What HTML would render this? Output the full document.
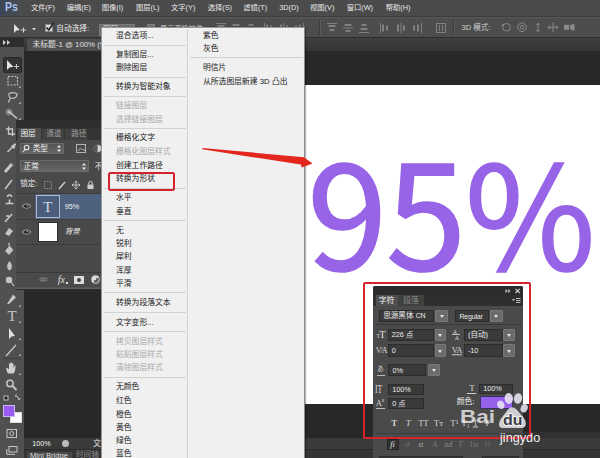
<!DOCTYPE html>
<html lang="zh-CN"><head><meta charset="utf-8"><title>Photoshop</title>
<style>

html,body{margin:0;padding:0}
html{width:600px;height:458px;overflow:hidden;background:#282828}
body{width:600px;height:458px;overflow:hidden;position:relative;background:#282828;font-family:"Liberation Sans","Noto Sans CJK SC",sans-serif;font-size:7.8px;color:#e4e4e4;line-height:1}
div,span{position:absolute;box-sizing:border-box;white-space:nowrap}
.t{transform:translateY(-50%)}
#menubar{left:0;top:0;width:600px;height:16px;background:#4b4b4b}
#menubar .t{top:7.8px;color:#eaeaea;font-size:7.3px}
#opts{left:0;top:16px;width:600px;height:22px;background:#4d4d4d;border-top:1px solid #3c3c3c;box-shadow:inset 0 1px 0 #595959;border-bottom:1px solid #2e2e2e}
#tabbar{left:24px;top:38px;width:576px;height:12.5px;background:linear-gradient(#404040,#343434)}
#doctab{left:3px;top:1px;width:76px;height:11.5px;background:#4e4e4e;color:#e0e0e0}
#work{left:24px;top:50.5px;width:576px;height:387.5px;background:#282828}
#canvas{left:305px;top:85px;width:295px;height:318.8px;background:#fff}
#big{left:307.3px;top:96.8px;font-family:"Noto Sans CJK SC","Liberation Sans",sans-serif;font-size:144px;color:#9764e8;letter-spacing:-1px;-webkit-text-stroke:1.7px #9764e8;line-height:220px;height:220px}
#tools{left:0;top:38px;width:24px;height:420px;background:#505050}
#toolhead{left:0;top:0;width:24px;height:8.5px;background:#2d2d2d}
#status{left:24px;top:438.2px;width:576px;height:11.8px;background:#3b3b3b;border-bottom:1.2px solid #2a2a2a}
#bottom{left:24px;top:450px;width:576px;height:8px;background:#353535}
#minib{left:2.7px;top:1.600px;width:45px;height:8px;background:#4a4a4a;color:#ddd}
#layers{left:15.7px;top:120px;width:90px;height:170px;background:#494949}
#menu{left:101px;top:27px;width:204px;height:431px;background:#f0f0f0;border-left:1px solid #979797;border-top:1px solid #979797;border-right:1px solid #8e8e8e;color:#1a1a1a;box-shadow:1px 0 1px rgba(0,0,0,.3)}
#menu .sep{height:1px;background:#d2d2d2}
#menu .dis{color:#a9a9a9}
#coldiv{left:85px;top:2px;width:1px;height:429px;background:#d0d0d0}
#redbox{left:107.7px;top:171.5px;width:67.8px;height:19.3px;border:2.1px solid #d3232c;border-radius:2.5px}
#charwrap{left:363.3px;top:282.3px;width:167.8px;height:156.8px;border:2.2px solid #d5242c;border-radius:2px}
#char{left:373.2px;top:286px;width:150.3px;height:172px;background:#4a4a4a;border-radius:2px 2px 0 0;overflow:hidden}
.inp{background:#3a3a3a;border:1px solid #2c2c2c;color:#ececec}
.btn{background:#6b6b6b;border:1px solid #787878;border-radius:1px}
.btn:after{content:"";position:absolute;left:50%;top:50%;margin:-1px 0 0 -2px;border:2px solid transparent;border-top:3px solid #e8e8e8;border-bottom:0}

</style></head><body>
<div id="menubar">
<span style="left:0;top:0;width:21px;height:16px;background:linear-gradient(90deg,#3d4656,#4a4c52)"></span>
<span class="t" style="left:5px;top:7.3px;font-size:12.5px;font-weight:bold;color:#a9c3ee;transform:translateY(-50%) scaleX(.84);transform-origin:left center">Ps</span>
<span class="t" style="left:31px">文件(F)</span>
<span class="t" style="left:66.7px">编辑(E)</span>
<span class="t" style="left:101.7px">图像(I)</span>
<span class="t" style="left:136px">图层(L)</span>
<span class="t" style="left:171px">文字(Y)</span>
<span class="t" style="left:207.7px">选择(S)</span>
<span class="t" style="left:243.3px">滤镜(T)</span>
<span class="t" style="left:279.3px">3D(D)</span>
<span class="t" style="left:310px">视图(V)</span>
<span class="t" style="left:346.7px">窗口(W)</span>
<span class="t" style="left:385.7px">帮助(H)</span>
</div>
<div id="opts">
<svg style="position:absolute;left:13px;top:5.5px" width="26" height="12" viewBox="0 0 26 12"><path d="M1 1 L1 10 L3.5 7.5 L7 7 Z" fill="#e0e0e0"/><path d="M8 7 h5 M10.5 4.5 v5" stroke="#d0d0d0" stroke-width="1" fill="none"/><path d="M19 5 h4 l-2 2.5z" fill="#d8d8d8"/></svg>
<span style="left:44.7px;top:7px;width:8px;height:8px;background:#d9d9d9;border:1px solid #8a8a8a"></span>
<svg style="position:absolute;left:44px;top:3.5px" width="12" height="12" viewBox="0 0 12 12"><path d="M2.5 6.5 L4.8 9 L9.5 2" stroke="#222" stroke-width="1.6" fill="none"/></svg>
<span class="t" style="left:56.3px;top:11.5px;color:#ececec;font-size:7.7px">自动选择:</span>
<span style="left:98.7px;top:6.7px;width:36px;height:12px;background:#6c6c6c;border:1px solid #7c7c7c"></span>
<span class="t" style="left:103px;top:12.5px;color:#eee;font-size:7.5px">图层</span>
<span style="left:147px;top:7px;width:7.5px;height:7.5px;background:#727272;border:1px solid #7e7e7e"></span>
<span class="t" style="left:160px;top:11.5px;color:#d8d8d8;font-size:7.2px">显示变换控件</span>
<svg style="position:absolute;left:0;top:0" width="600" height="21" viewBox="0 17 600 21" fill="none">
<path d="M216 23.5 h10" stroke="#7c7c7c"/><rect x="217.5" y="25" width="7" height="2" fill="#7c7c7c"/><rect x="218.5" y="29" width="5" height="2" fill="#7c7c7c"/>
<rect x="232.5" y="24" width="7" height="2" fill="#7c7c7c"/><path d="M231 28 h10" stroke="#7c7c7c"/><rect x="233.5" y="30" width="5" height="2" fill="#7c7c7c"/>
<rect x="248.5" y="24" width="5" height="2" fill="#7c7c7c"/><rect x="247.5" y="28" width="7" height="2" fill="#7c7c7c"/><path d="M246 32.500 h10" stroke="#7c7c7c"/>
<path d="M264.5 23 v10" stroke="#7c7c7c"/><rect x="266" y="24.500" width="2" height="7" fill="#7c7c7c"/><rect x="270" y="25.500" width="2" height="5" fill="#7c7c7c"/>
<rect x="280" y="24.500" width="2" height="7" fill="#7c7c7c"/><path d="M284 23 v10" stroke="#7c7c7c"/><rect x="286" y="25.500" width="2" height="5" fill="#7c7c7c"/>
<rect x="295" y="25.500" width="2" height="5" fill="#7c7c7c"/><rect x="299" y="24.500" width="2" height="7" fill="#7c7c7c"/><path d="M303.5 23 v10" stroke="#7c7c7c"/>
<path d="M327 23.5 h10" stroke="#808080"/><rect x="328.5" y="25" width="7" height="2" fill="#808080"/><rect x="329.5" y="29" width="5" height="2" fill="#808080"/>
<rect x="344.5" y="24" width="7" height="2" fill="#808080"/><path d="M343 28 h10" stroke="#808080"/><rect x="345.5" y="30" width="5" height="2" fill="#808080"/>
<rect x="361.5" y="24" width="5" height="2" fill="#808080"/><rect x="360.5" y="28" width="7" height="2" fill="#808080"/><path d="M359 32.500 h10" stroke="#808080"/>
<path d="M380.5 23 v10" stroke="#808080"/><rect x="382" y="24.500" width="2" height="7" fill="#808080"/><rect x="386" y="25.500" width="2" height="5" fill="#808080"/>
<rect x="397" y="24.500" width="2" height="7" fill="#808080"/><path d="M401 23 v10" stroke="#808080"/><rect x="403" y="25.500" width="2" height="5" fill="#808080"/>
<rect x="413" y="25.500" width="2" height="5" fill="#808080"/><rect x="417" y="24.500" width="2" height="7" fill="#808080"/><path d="M421.5 23 v10" stroke="#808080"/>
<rect x="436.500" y="23.500" width="9" height="9" stroke="#808080"/><path d="M439.500 25 v6 M442.500 25 v6" stroke="#808080"/>
<path d="M319.500 20 v15 M453.500 20 v15" stroke="#3c3c3c"/><path d="M320.500 20 v15 M454.500 20 v15" stroke="#5a5a5a"/>
<g transform="translate(0.5,-0.7)">
<circle cx="506" cy="28" r="3.800" stroke="#8a8a8a"/><path d="M503 24.500 l-1.500 1.500 l2 .5" stroke="#8a8a8a"/>
<circle cx="521.500" cy="28" r="4.300" stroke="#8a8a8a"/><circle cx="521.500" cy="28" r="1.800" stroke="#8a8a8a"/>
<path d="M537.500 24 v8.500 M535.500 26 l2 -2 l2 2 M535.500 30.500 l2 2 l2 -2" stroke="#8a8a8a"/>
<path d="M547.500 28 h10 M552.500 23 v10 M549.500 26 l-2 2 l2 2 M555.500 26 l2 2 l-2 2" stroke="#8a8a8a"/>
<rect x="563.500" y="25.500" width="5" height="5" fill="#8a8a8a"/><path d="M569.500 26 l4.500 -1.500 v7 l-4.500 -1.500z" fill="#8a8a8a"/>
</g>
</svg>
<span class="t" style="left:461.500px;top:10.500px;color:#cfcfcf;font-size:7.5px">3D 模式:</span>
</div>
<div id="tabbar"><div id="doctab"><span class="t" style="left:5.5px;top:5.5px;font-size:7.8px">未标题-1 @ 100% (95%, RGB/8)</span></div></div>
<div id="work"></div>
<div id="canvas"></div>
<span style="left:523px;top:431.5px;width:77px;height:7px;background:#313131"></span>
<div id="big">95<span style="position:static;display:inline-block;transform:scaleX(.984);transform-origin:left center">%</span></div>
<div id="status"><span class="t" style="left:8.3px;top:6px;color:#f4f4f4;font-size:7.2px">100%</span><span style="left:37.5px;top:1.5px;width:7.5px;height:7.5px;border-radius:4px;background:#bdbdbd"></span><span class="t" style="left:69px;top:6px;color:#e0e0e0;font-size:8px">文档:</span></div>
<div id="bottom"><div id="minib"><span class="t" style="left:3.3px;top:4.700px;font-size:7.6px">Mini Bridge</span></div><span class="t" style="left:52px;top:5.3px;font-size:7.6px;color:#8c8c8c">时间轴</span></div>
<div id="tools"><div id="toolhead"><svg style="position:absolute;left:3px;top:2px" width="8" height="5" viewBox="0 0 8 5"><path d="M0 0 L3 2.5 L0 5z M4 0 L7 2.5 L4 5z" fill="#d0d0d0"/></svg></div>
<span style="left:3px;top:19.3px;width:19px;height:16px;background:#343434;border:1px solid #272727;border-radius:2px"></span>
<svg style="position:absolute;left:0;top:0" width="24" height="420" viewBox="0 38 24 420" fill="none" stroke="#c6c6c6" stroke-width="1.2">
<path d="M7 60 L7 70 L9.8 67.2 L13.5 67 Z" fill="#e6e6e6" stroke="none"/><path d="M14 66.5 h5 M16.5 64 v5" stroke-width="1"/>
<path d="M18.5 88 h2.2 v-2.200z" fill="#bdbdbd" stroke="none"/><path d="M18.5 104 h2.2 v-2.200z" fill="#bdbdbd" stroke="none"/><path d="M18.5 120 h2.2 v-2.200z" fill="#bdbdbd" stroke="none"/><path d="M18.5 137 h2.2 v-2.200z" fill="#bdbdbd" stroke="none"/><path d="M18.5 154 h2.2 v-2.200z" fill="#bdbdbd" stroke="none"/><path d="M18.5 171 h2.2 v-2.200z" fill="#bdbdbd" stroke="none"/><path d="M18.5 188 h2.2 v-2.200z" fill="#bdbdbd" stroke="none"/><path d="M18.5 205 h2.2 v-2.200z" fill="#bdbdbd" stroke="none"/><path d="M18.5 221 h2.2 v-2.200z" fill="#bdbdbd" stroke="none"/><path d="M18.5 238 h2.2 v-2.200z" fill="#bdbdbd" stroke="none"/><path d="M18.5 255 h2.2 v-2.200z" fill="#bdbdbd" stroke="none"/><path d="M18.5 271 h2.2 v-2.200z" fill="#bdbdbd" stroke="none"/><path d="M18.5 288 h2.2 v-2.200z" fill="#bdbdbd" stroke="none"/><path d="M18.5 307 h2.2 v-2.200z" fill="#bdbdbd" stroke="none"/><path d="M18.5 323 h2.2 v-2.200z" fill="#bdbdbd" stroke="none"/><path d="M18.5 340 h2.2 v-2.200z" fill="#bdbdbd" stroke="none"/><path d="M18.5 356 h2.2 v-2.200z" fill="#bdbdbd" stroke="none"/><path d="M18.5 375 h2.2 v-2.200z" fill="#bdbdbd" stroke="none"/>
<rect x="8" y="76.500" width="9.500" height="8.500" stroke-dasharray="2 1.3" />
<path d="M9 93.500 q5 -2 8 0.500 q0 4 -4.500 4.500 q-4.500 -0.500 -3.500 -5 M10 98.500 l-1.500 4" />
<path d="M10 112.500 L17 118.500" stroke-width="1.600"/><path d="M9 108.500 v7 M5.500 112 h7 M6.500 109.500 l5 5 M11.500 109.500 l-5 5" stroke-width=".9"/>
<path d="M8.500 126.500 v7.500 h6.500 M6 129 h6.500 v7" stroke-width="1.300"/>
<path d="M7.500 152 L12.500 147" stroke-width="1.500"/><path d="M12 145.500 l2.500 2.500" stroke-width="2.600"/><path d="M13.500 146 l1.500 -1.500" stroke-width="2.200" stroke-linecap="round"/>
<path d="M5 172 L12 164" stroke-width="3"/>
<path d="M5 189 L12 180" stroke-width="1.6"/>
<path d="M5.500 203.500 h8 M9.500 203.500 v-4 M7.500 197 a2 2 0 1 1 4 0" stroke-width="1.6"/>
<path d="M5 222 l7 -8 M6 216 l3 0" stroke-width="1.6"/>
<path d="M5 234 l4 -6 l4 3 l-4 5z" fill="#c4c4c4" stroke="none"/>
<path d="M5.500 251 l4 -5 l3.500 4 l-4 4.500z M9.500 246 q-2 -3 0 -3" fill="#c4c4c4" stroke="#c4c4c4" stroke-width=".8"/>
<path d="M9.500 261 q5 6 0 9.500 q-5 -3.500 0 -9.500z" fill="#c4c4c4" stroke="none"/>
<circle cx="9" cy="280" r="3.200" fill="#c4c4c4" stroke="none"/><path d="M11 282 l3 4" stroke="#c4c4c4"/>
<path d="M7 304 L13 294.500 L16 297.500 L9 304z M7 304 l-1 2" fill="#c4c4c4" stroke="none"/>
<text x="12" y="321.300" font-family="Liberation Serif, serif" font-size="15" text-anchor="middle" fill="#cacaca" stroke="none">T</text>
<path d="M9 328 L9 339 L11.5 336.5 L15 336 Z" fill="#e0e0e0" stroke="none"/>
<path d="M6 356 L16 345" stroke-width="1.3"/>
<path d="M8 373.500 q-3 -5 -1 -6 l2 2 v-6 h1.5 v4 v-5 h1.5 v5 v-4 h1.5 v5 l1 -3 h1 q0 6 -2 8z" fill="#cecece" stroke="none"/><path d="M3 358.500 h18" stroke="#3e3e3e" stroke-width="1"/>
<circle cx="10" cy="383.5" r="3.2" stroke-width="1.5"/><path d="M12.5 386 l4 4" stroke-width="2"/>
<rect x="4" y="396" width="4" height="4" fill="#222" stroke="#ddd" stroke-width=".8"/><path d="M15 396 q4 0 4 4 M15 396 l2 -1.5 M19 400 l1.5 -2" stroke-width=".9"/>
<rect x="7" y="429.500" width="9.500" height="8" stroke-width="1"/><circle cx="11.700" cy="433.500" r="2" stroke-width="1"/>
<rect x="9" y="446.500" width="8" height="5.500" stroke-width="1"/><path d="M6.800 449 v5.300 h8.200" stroke-width="1"/>
</svg>
<span style="left:10px;top:374.200px;width:11.500px;height:11.200px;background:#fff;border:1px solid #ddd"></span>
<span style="left:3.2px;top:366.700px;width:12.2px;height:12.200px;background:#9a5cf0;border:1px solid #cdb8f2"></span>
</div>
<div id="layers">
<span style="left:0;top:0;width:90px;height:8px;background:#2e2e2e"></span>
<span style="left:0;top:7.7px;width:90px;height:12px;background:#343434"></span>
<span style="left:2.3px;top:8px;width:23px;height:12px;background:#4e4e4e"></span>
<span style="left:26.500px;top:8.500px;width:21.500px;height:11px;background:#414141"></span>
<span style="left:49.500px;top:8.500px;width:21.500px;height:11px;background:#414141"></span>
<span class="t" style="left:5px;top:14px;color:#f0f0f0;font-size:7.5px">图层</span>
<span class="t" style="left:30.500px;top:14px;color:#9a9a9a;font-size:7.5px">通道</span>
<span class="t" style="left:55.500px;top:14px;color:#9a9a9a;font-size:7.5px">路径</span>
<span style="left:4px;top:22.500px;width:44px;height:11.500px;background:linear-gradient(#545454,#666);border:1px solid #6a6a6a;border-radius:1px"></span>
<svg style="position:absolute;left:6px;top:24px" width="9" height="9" viewBox="0 0 9 9" fill="none" stroke="#e4e4e4" stroke-width="1.1"><circle cx="4.600" cy="3.500" r="2.300"/><path d="M3 5.500 L1 8"/></svg>
<span class="t" style="left:17px;top:29.2px;color:#f2f2f2;font-size:7.6px">类型</span>
<svg style="position:absolute;left:40px;top:24px" width="6" height="9" viewBox="0 0 6 9"><path d="M1 3.500 L3 1 L5 3.500z M1 5.500 L3 8 L5 5.500z" fill="#e8e8e8"/></svg>
<svg style="position:absolute;left:59px;top:23px" width="32" height="11" viewBox="0 0 32 11" fill="none" stroke="#b4b4b4" stroke-width="1"><rect x="1.500" y="1.500" width="9" height="8"/><path d="M3 8 l2.500 -3 l2 2 l1 -1 l1.500 2" /><circle cx="22.500" cy="5.500" r="3.800" fill="#cfcfcf" stroke="none"/><path d="M22.500 1.700 a3.800 3.800 0 0 0 0 7.600z" fill="#555" stroke="none"/></svg>
<span style="left:4px;top:40px;width:69.500px;height:12px;background:linear-gradient(#525252,#686868);border:1px solid #6a6a6a;border-radius:1px"></span>
<span class="t" style="left:8px;top:47.300px;color:#f2f2f2;font-size:7.6px">正常</span>
<svg style="position:absolute;left:65px;top:42px" width="6" height="9" viewBox="0 0 6 9"><path d="M1 3.500 L3 1 L5 3.500z M1 5.500 L3 8 L5 5.500z" fill="#e8e8e8"/></svg>
<span class="t" style="left:79px;top:47.300px;color:#e6e6e6;font-size:7.6px">不透明度</span>
<span class="t" style="left:4.500px;top:64px;color:#eaeaea;font-size:7.6px">锁定:</span>
<svg style="position:absolute;left:27px;top:58.500px" width="60" height="12" viewBox="0 0 60 12" fill="none" stroke="#cdcdcd" stroke-width="1"><rect x="1.500" y="2.500" width="7" height="7" stroke="#8a8a8a" stroke-dasharray="1.500 1"/><path d="M16 10 L22 3" stroke-width="1.400"/><path d="M33 2 v8 M29 6 h8 M31.500 3.500 L33 2 l1.500 1.500 M31.500 8.500 L33 10 l1.500 -1.500 M30.500 4.500 L29 6 l1.500 1.500 M35.500 4.500 L37 6 l-1.500 1.500" stroke-width=".9"/><rect x="44.500" y="5.500" width="6" height="4.500" fill="#cdcdcd" stroke="none"/><path d="M45.800 5.500 v-1.500 a1.700 1.700 0 0 1 3.400 0 v1.500"/></svg>
<span style="left:0;top:73px;width:90px;height:1px;background:#3c3c3c"></span>
<span style="left:19px;top:74px;width:71px;height:25px;background:#4e617f"></span>
<span style="left:0;top:99px;width:90px;height:1px;background:#3c3c3c"></span>
<span style="left:0;top:124px;width:90px;height:1px;background:#3c3c3c"></span>
<svg style="position:absolute;left:5px;top:82px" width="11" height="8" viewBox="0 0 11 8"><path d="M0.500 4 Q5.500 -1.500 10.500 4 Q5.500 9.500 0.500 4z" fill="#9c9c9c"/><path d="M2 4 Q5.500 0.300 9 4 Q5.500 7.700 2 4z" fill="#262626"/><circle cx="6.300" cy="3.400" r=".9" fill="#8a8a8a"/></svg>
<svg style="position:absolute;left:5px;top:108px" width="11" height="8" viewBox="0 0 11 8"><path d="M0.500 4 Q5.500 -1.500 10.500 4 Q5.500 9.500 0.500 4z" fill="#9c9c9c"/><path d="M2 4 Q5.500 0.300 9 4 Q5.500 7.700 2 4z" fill="#262626"/><circle cx="6.300" cy="3.400" r=".9" fill="#8a8a8a"/></svg>
<span style="left:20.300px;top:74.800px;width:24.300px;height:23.200px;background:#4b5d7a;border:1px solid #aebace"></span>
<span class="t" style="left:27.300px;top:86.800px;font-family:'Liberation Serif',serif;font-size:15.500px;color:#cdd8e8">T</span>
<span class="t" style="left:49px;top:87px;color:#f4f4f4;font-size:7.2px">95%</span>
<span style="left:22px;top:101.500px;width:20px;height:20px;background:#fff;border:1px solid #2e2e2e"></span>
<span class="t" style="left:49px;top:112px;color:#f0f0f0;font-size:7.6px;font-style:italic">背景</span>
<span style="left:0;top:152px;width:90px;height:18px;background:#4a4a4a;border-top:1px solid #393939;border-bottom:1.500px solid #2c2c2c;box-shadow:inset 0 -1.500px 0 #5e5e5e"></span>
<svg style="position:absolute;left:21.500px;top:154px" width="70" height="12" viewBox="0 0 70 12" fill="none" stroke="#8a8a8a" stroke-width="1"><rect x="3" y="4" width="4" height="3" rx="1.500"/><rect x="6" y="4" width="4" height="3" rx="1.500"/></svg>
<span class="t" style="left:42px;top:160px;font-family:'Liberation Serif',serif;font-style:italic;font-size:10px;color:#e2e2e2">fx</span>
<span style="left:50.500px;top:162px;width:2px;height:2px;background:#ddd"></span>
<span style="left:58px;top:156px;width:10px;height:8px;background:#dcdcdc"></span><span style="left:61px;top:158px;width:4px;height:4px;border-radius:2px;background:#444"></span>
<span style="left:75px;top:155px;width:9px;height:9px;border-radius:5px;background:linear-gradient(135deg,#ddd 50%,#666 50%);border:1px solid #ccc"></span>
</div>
<div id="menu">
<span class="t" style="left:14px;top:7.8px">混合选项...</span>
<span class="sep" style="left:2px;top:16.6px;width:82px"></span>
<span class="t" style="left:14px;top:26.8px">复制图层...</span>
<span class="t" style="left:14px;top:40.3px">删除图层</span>
<span class="sep" style="left:2px;top:48.8px;width:82px"></span>
<span class="t" style="left:14px;top:59.3px">转换为智能对象</span>
<span class="sep" style="left:2px;top:68.4px;width:82px"></span>
<span class="t dis" style="left:14px;top:78.3px">链接图层</span>
<span class="t dis" style="left:14px;top:91.8px">选择链接图层</span>
<span class="sep" style="left:2px;top:99.8px;width:82px"></span>
<span class="t" style="left:14px;top:110.4px">栅格化文字</span>
<span class="t dis" style="left:14px;top:124.0px">栅格化图层样式</span>
<span class="t" style="left:14px;top:137.6px">创建工作路径</span>
<span class="t" style="left:14px;top:151.3px">转换为形状</span>
<span class="sep" style="left:2px;top:160.4px;width:82px"></span>
<span class="t" style="left:14px;top:170.1px">水平</span>
<span class="t" style="left:14px;top:183.5px">垂直</span>
<span class="sep" style="left:2px;top:192.4px;width:82px"></span>
<span class="t" style="left:14px;top:203.0px">无</span>
<span class="t" style="left:14px;top:216.2px">锐利</span>
<span class="t" style="left:14px;top:229.3px">犀利</span>
<span class="t" style="left:14px;top:242.6px">浑厚</span>
<span class="t" style="left:14px;top:256.1px">平滑</span>
<span class="sep" style="left:2px;top:264.4px;width:82px"></span>
<span class="t" style="left:14px;top:275.4px">转换为段落文本</span>
<span class="sep" style="left:2px;top:284.1px;width:82px"></span>
<span class="t" style="left:14px;top:294.8px">文字变形...</span>
<span class="sep" style="left:2px;top:303.2px;width:82px"></span>
<span class="t dis" style="left:14px;top:313.6px">拷贝图层样式</span>
<span class="t dis" style="left:14px;top:327.0px">粘贴图层样式</span>
<span class="t dis" style="left:14px;top:340.1px">清除图层样式</span>
<span class="sep" style="left:2px;top:348.6px;width:82px"></span>
<span class="t" style="left:14px;top:359.3px">无颜色</span>
<span class="t" style="left:14px;top:372.8px">红色</span>
<span class="t" style="left:14px;top:386.6px">橙色</span>
<span class="t" style="left:14px;top:399.8px">黄色</span>
<span class="t" style="left:14px;top:412.8px">绿色</span>
<span class="t" style="left:14px;top:426.1px">蓝色</span>
<div id="coldiv"></div>
<span class="t" style="left:101px;top:8.0px">紫色</span>
<span class="t" style="left:101px;top:21.4px">灰色</span>
<span class="sep" style="left:88px;top:29.0px;width:113px"></span>
<span class="t" style="left:101px;top:40.2px">明信片</span>
<span class="t" style="left:101px;top:53.8px">从所选图层新建 3D 凸出</span>
</div>
<div id="redbox"></div>
<svg style="position:absolute;left:0;top:0" width="600" height="458" viewBox="0 0 600 458"><path d="M202.300 147.900 L303.800 157.300 L312.600 163.500 L301.800 167.600 L300.800 164.600 L202.300 149.300 Z" fill="#e3261e"/></svg>
<div id="char">
<span style="left:0;top:0;width:151px;height:9px;background:#2b2b2b"></span>
<svg style="position:absolute;left:132px;top:2px" width="18" height="6" viewBox="0 0 18 6"><path d="M0.5 0.8 L2.7 3 L0.5 5.2z M3.3 0.8 L5.5 3 L3.3 5.2z" fill="#c4c4c4"/><path d="M10.5 0.8 l4.2 4.2 M14.7 0.8 l-4.2 4.200" stroke="#d0d0d0" stroke-width="1.1"/></svg>
<span style="left:0;top:9px;width:151px;height:10.5px;background:#2f2f2f"></span>
<span style="left:24.5px;top:9px;width:26px;height:10.5px;background:#404040"></span>
<span style="left:2.5px;top:9px;width:22px;height:10.5px;background:#4f4f4f"></span>
<span class="t" style="left:5.5px;top:14.5px;color:#f4f4f4;font-size:7.8px">字符</span>
<span class="t" style="left:30px;top:14.5px;color:#868686;font-size:7.8px">段落</span>
<svg style="position:absolute;left:139px;top:11.5px" width="9" height="6" viewBox="0 0 9 6"><path d="M0 1 h3 l-1.500 2z" fill="#ccc"/><path d="M4 0.500 h4.500 M4 2.500 h4.500 M4 4.500 h4.500" stroke="#ccc" stroke-width=".9"/></svg>
<span class="inp" style="left:6px;top:23.6px;width:55px;height:12.2px"><span class="t" style="left:3px;top:5.6px;font-size:7.6px;letter-spacing:0px">思源黑体 <span style="position:static;font-size:7px;letter-spacing:-.3px">CN</span></span></span>
<span class="btn" style="left:62px;top:23.6px;width:12.8px;height:12.2px"></span>
<span class="inp" style="left:82.3px;top:23.6px;width:34px;height:12.2px"><span class="t" style="left:3px;top:5.6px;font-size:7px;letter-spacing:-0.2px">Regular</span></span>
<span class="btn" style="left:116.8px;top:23.6px;width:12.8px;height:12.2px"></span>
<span style="left:3px;top:38px;width:145px;height:1px;background:#3a3a3a"></span>
<span class="inp" style="left:14.5px;top:42.5px;width:46.3px;height:12.3px"><span class="t" style="left:3px;top:5.65px;font-size:7.3px;letter-spacing:0px">226 点</span></span>
<span class="btn" style="left:61.5px;top:42.5px;width:11.5px;height:12.3px"></span>
<span class="inp" style="left:90.7px;top:42.5px;width:38.8px;height:12.3px"><span class="t" style="left:3px;top:5.65px;font-size:7.6px;letter-spacing:0px">(自动)</span></span>
<span class="btn" style="left:130.3px;top:42.5px;width:11.2px;height:12.3px"></span>
<span class="inp" style="left:14.5px;top:58.3px;width:46.3px;height:12.5px"><span class="t" style="left:3px;top:5.75px;font-size:7.3px;letter-spacing:0px">0</span></span>
<span class="btn" style="left:61.5px;top:58.3px;width:11.5px;height:12.5px"></span>
<span class="inp" style="left:90.7px;top:58.3px;width:38.8px;height:12.5px"><span class="t" style="left:3px;top:5.75px;font-size:7.3px;letter-spacing:0px">-10</span></span>
<span class="btn" style="left:130.3px;top:58.3px;width:11.2px;height:12.5px"></span>
<span class="inp" style="left:15.3px;top:78.2px;width:38px;height:12.3px"><span class="t" style="left:3px;top:5.65px;font-size:7.3px;letter-spacing:0px">0%</span></span>
<span class="btn" style="left:54.5px;top:78.2px;width:12.5px;height:12.3px"></span>
<span class="inp" style="left:15px;top:97.5px;width:35.5px;height:11px"><span class="t" style="left:3px;top:5.0px;font-size:7.3px;letter-spacing:0px">100%</span></span>
<span class="inp" style="left:106px;top:97.5px;width:33.5px;height:10.5px"><span class="t" style="left:3px;top:4.75px;font-size:7.3px;letter-spacing:0px">100%</span></span>
<span class="inp" style="left:15px;top:111.5px;width:35.5px;height:11px"><span class="t" style="left:3px;top:5.0px;font-size:7.3px;letter-spacing:0px">0 点</span></span>
<span class="t" style="left:83.5px;top:116px;color:#f0f0f0;font-size:7.8px">颜色:</span>
<span style="left:106.5px;top:109.5px;width:33.5px;height:13.5px;background:#9661ea;border:1px solid #3a3360"></span>
<span class="t" style="left:3px;top:49.5px;font-family:'Liberation Serif',serif;color:#d8d8d8;font-size:6.5px">T</span><span class="t" style="left:6px;top:48.5px;font-family:'Liberation Serif',serif;color:#d8d8d8;font-size:10.5px">T</span>
<span class="t" style="left:79.5px;top:46px;font-family:'Liberation Serif',serif;color:#d8d8d8;font-size:6px">A</span><span class="t" style="left:81.5px;top:51.5px;font-family:'Liberation Serif',serif;color:#d8d8d8;font-size:6px">A</span><span style="left:79px;top:48.3px;width:8px;height:1px;background:#bbb"></span>
<span class="t" style="left:2.5px;top:65px;font-family:'Liberation Serif',serif;color:#d8d8d8;font-size:8px;letter-spacing:-1px">V/A</span>
<span class="t" style="left:78.5px;top:64.5px;font-family:'Liberation Serif',serif;color:#d8d8d8;font-size:8.5px;letter-spacing:-.5px;border-bottom:1px solid #ccc">VA</span>
<span class="t" style="left:4px;top:83px;color:#cfcfcf;font-size:6.5px">あ</span><span style="left:3.5px;top:88.5px;width:8px;height:1px;background:#bbb"></span>
<span class="t" style="left:2px;top:103px;font-family:'Liberation Serif',serif;color:#d8d8d8;font-size:12.5px;transform:translateY(-50%) scaleX(.62);transform-origin:left center">IT</span>
<span class="t" style="left:96px;top:101.5px;font-family:'Liberation Serif',serif;color:#d8d8d8;font-size:9px">T</span><span style="left:94px;top:106.5px;width:9px;height:1px;background:#ccc"></span>
<span class="t" style="left:2.5px;top:116.5px;font-family:'Liberation Serif',serif;color:#d8d8d8;font-size:8.5px">A<span style="position:static;font-size:5.5px;vertical-align:super">a</span></span><span style="left:2.5px;top:121.5px;width:9px;height:1px;background:#bbb"></span>
<span class="t" style="left:18px;top:136.5px;font-family:'Liberation Serif',serif;font-size:9px;color:#d2d2d2;font-weight:bold">T</span>
<span class="t" style="left:32.5px;top:136.5px;font-family:'Liberation Serif',serif;font-size:9px;color:#d2d2d2;font-style:italic">T</span>
<span class="t" style="left:45px;top:136.5px;font-family:'Liberation Serif',serif;font-size:9px;color:#d2d2d2;letter-spacing:-.5px">TT</span>
<span class="t" style="left:60.5px;top:136.5px;font-family:'Liberation Serif',serif;font-size:9px;color:#d2d2d2;">Tт</span>
<span class="t" style="left:77px;top:136.5px;font-family:'Liberation Serif',serif;font-size:9px;color:#d2d2d2;">T¹</span>
<span class="t" style="left:88px;top:136.5px;font-family:'Liberation Serif',serif;font-size:9px;color:#d2d2d2;">T₁</span>
<span class="t" style="left:99.5px;top:136.5px;font-family:'Liberation Serif',serif;font-size:9px;color:#d2d2d2;text-decoration:underline">T</span>
<span class="t" style="left:111px;top:136.5px;font-family:'Liberation Serif',serif;font-size:9px;color:#d2d2d2;text-decoration:line-through">T</span>
<span style="left:3px;top:146.5px;width:145px;height:1px;background:#3c3c3c"></span>
<span style="left:14px;top:152.5px;width:12px;height:11.5px;background:#333;border:1px solid #262626"></span>
<span class="t" style="left:17px;top:158.5px;font-family:'Liberation Serif',serif;font-style:italic;font-size:8px;color:#e8e8e8">fi</span>
<span class="t" style="left:32px;top:158.5px;font-family:'Liberation Serif',serif;font-style:italic;font-size:8px;color:#7c7c7c">ơ</span>
<span class="t" style="left:45px;top:158.5px;font-family:'Liberation Serif',serif;font-style:italic;font-size:8px;color:#a8a8a8">st</span>
<span class="t" style="left:59px;top:158.5px;font-family:'Liberation Serif',serif;font-style:italic;font-size:8px;color:#7c7c7c">A</span>
<span class="t" style="left:71px;top:158.5px;font-family:'Liberation Serif',serif;font-style:italic;font-size:8px;color:#8c8c8c">ad</span>
<span class="t" style="left:85px;top:158.5px;font-family:'Liberation Serif',serif;font-style:italic;font-size:8px;color:#7c7c7c">T</span>
<span class="t" style="left:96px;top:158.5px;font-family:'Liberation Serif',serif;font-style:italic;font-size:8px;color:#7c7c7c">1st</span>
<span class="t" style="left:111px;top:158.5px;font-family:'Liberation Serif',serif;font-style:italic;font-size:8px;color:#7c7c7c">½</span>
<span class="inp" style="left:6px;top:169.700px;width:84px;height:8px"></span>
<span class="inp" style="left:109px;top:169.700px;width:37px;height:8px"></span>
</div>
<div id="charwrap"></div>
<div id="wm" style="left:455px;top:390px;width:110px;height:68px">
<span class="t" style="left:5px;top:27.300px;font-size:18.500px;font-weight:bold;color:rgba(255,255,255,.72);transform:translateY(-50%) scaleX(1.22);transform-origin:left center">Bai</span>
<svg style="position:absolute;left:40px;top:0" width="36" height="40" viewBox="495 390 36 40"><g fill="rgba(236,232,246,.86)"><ellipse cx="500.800" cy="404.800" rx="3.500" ry="4.300" transform="rotate(-25 500.800 404.800)"/><ellipse cx="508.800" cy="398.500" rx="4.200" ry="5.400" transform="rotate(-5 508.800 398.500)"/><ellipse cx="518" cy="398.500" rx="4.100" ry="5.300" transform="rotate(8 518 398.500)"/><ellipse cx="524.200" cy="408.200" rx="3.400" ry="4.400" transform="rotate(25 524.200 408.200)"/></g><path d="M511.800 407.300 q3 0 6.500 4.200 l5.500 6.500 q2.500 3.500 2 6.500 q-0.500 3.300 -4 3.500 l-19.500 0 q-3.200 -0.300 -3.300 -3.500 q-0.200 -3 2.500 -6.500 l5 -6.500 q2.500 -4.200 5.300 -4.200z" fill="rgba(222,222,226,.9)"/></svg>
<svg style="position:absolute;left:42px;top:18px" width="34" height="22" viewBox="0 0 34 22"><text x="6" y="17.300" font-family="Liberation Sans, sans-serif" font-weight="bold" font-size="15.500" fill="#3c3c48" stroke="#f4f4f4" stroke-width="2" paint-order="stroke" stroke-linejoin="round" textLength="19.500" lengthAdjust="spacingAndGlyphs">du</text></svg>
<span class="t" style="left:45px;top:47.5px;font-size:12.700px;color:rgba(255,255,255,.94);letter-spacing:0">jingydo</span>
</div>
</body></html>
